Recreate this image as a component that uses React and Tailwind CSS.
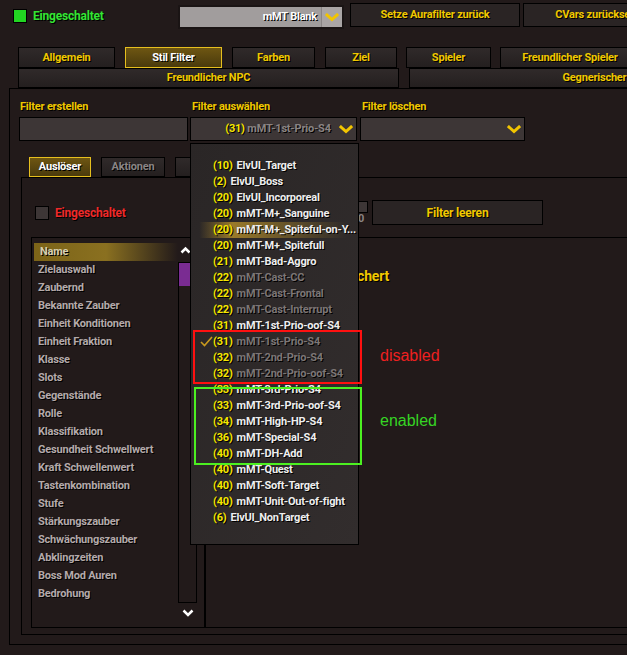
import React from "react";

const FONT = "font-[family-name:Roboto,'Liberation_Sans',sans-serif] font-bold tracking-[-0.2px] whitespace-nowrap";
const SH = "[text-shadow:1px_1px_0_#000]";

const FILTERS = [
  ["10", "ElvUI_Target", true],
  ["2", "ElvUI_Boss", true],
  ["20", "ElvUI_Incorporeal", true],
  ["20", "mMT-M+_Sanguine", true],
  ["20", "mMT-M+_Spiteful-on-Y...", true, "hover"],
  ["20", "mMT-M+_Spitefull", true],
  ["21", "mMT-Bad-Aggro", true],
  ["22", "mMT-Cast-CC", false],
  ["22", "mMT-Cast-Frontal", false],
  ["22", "mMT-Cast-Interrupt", false],
  ["31", "mMT-1st-Prio-oof-S4", true],
  ["31", "mMT-1st-Prio-S4", false, "checked"],
  ["32", "mMT-2nd-Prio-S4", false],
  ["32", "mMT-2nd-Prio-oof-S4", false],
  ["33", "mMT-3rd-Prio-S4", true],
  ["33", "mMT-3rd-Prio-oof-S4", true],
  ["34", "mMT-High-HP-S4", true],
  ["36", "mMT-Special-S4", true],
  ["40", "mMT-DH-Add", true],
  ["40", "mMT-Quest", true],
  ["40", "mMT-Soft-Target", true],
  ["40", "mMT-Unit-Out-of-fight", true],
  ["6", "ElvUI_NonTarget", true],
];

const TRIGGERS = [
  "Name",
  "Zielauswahl",
  "Zaubernd",
  "Bekannte Zauber",
  "Einheit Konditionen",
  "Einheit Fraktion",
  "Klasse",
  "Slots",
  "Gegenstände",
  "Rolle",
  "Klassifikation",
  "Gesundheit Schwellwert",
  "Kraft Schwellenwert",
  "Tastenkombination",
  "Stufe",
  "Stärkungszauber",
  "Schwächungszauber",
  "Abklingzeiten",
  "Boss Mod Auren",
  "Bedrohung",
];

function Chevron({ className = "" }) {
  return (
    <svg width="14" height="9" viewBox="0 0 14 9" className={className}>
      <path d="M2 2 L7 6.5 L12 2" fill="none" stroke="#f2c500" strokeWidth="3" strokeLinecap="square" />
    </svg>
  );
}

function Tab({ w, children, active, dim }) {
  return (
    <div
      className={`flex items-center justify-center h-full border ${w} ${SH} ${
        active
          ? "border-[#e6bf1e] bg-gradient-to-b from-[#6e5612] to-[#4a3a0c] text-white"
          : "border-black bg-gradient-to-b from-[#302a2a] to-[#241f1f] " + (dim ? "text-[#8a8585]" : "text-[#f0c800]")
      }`}
    >
      {children}
    </div>
  );
}

export default function App() {
  return (
    <div className={`relative w-[627px] h-[655px] overflow-hidden bg-[#221a1a] text-[11px] leading-[16px] ${FONT}`}>
      {/* top bar */}
      <div className="flex items-start h-[47px] pt-[3px]">
        <div className="shrink-0 flex items-center w-[178px] pl-[13px] pt-[5px]">
          <span className="w-[14px] h-[14px] bg-[#22d622] border border-black" />
          <span className={`ml-[6px] text-[12px] text-[#33e633] ${SH}`}>Eingeschaltet</span>
        </div>
        <div className="shrink-0 flex mt-[2px] w-[166px] h-[24px] border-2 border-[#1a1414] bg-[#a19d9d]">
          <div className={`flex-1 text-right pr-[4px] leading-[20px] text-white ${SH}`}>mMT Blank</div>
          <div className="w-[21px] flex items-center justify-center bg-[#aaa5a5] border-l border-[#8a8585]">
            <Chevron />
          </div>
        </div>
        <div className={`shrink-0 ml-[6px] w-[170px] h-[24px] flex items-center justify-center border border-black bg-[#2a2424] text-[#f0c800] ${SH}`}>
          Setze Aurafilter zurück
        </div>
        <div className={`shrink-0 ml-[3px] w-[160px] h-[24px] flex items-center justify-center border border-black bg-[#2a2424] text-[#f0c800] ${SH}`}>
          CVars zurücksetzen
        </div>
      </div>

      {/* tab rows */}
      <div className="flex h-[21px]">
        <div className="shrink-0 ml-[18px]"><Tab w="w-[97px]">Allgemein</Tab></div>
        <div className="shrink-0 ml-[10px]"><Tab w="w-[97px]" active>Stil Filter</Tab></div>
        <div className="shrink-0 ml-[10px]"><Tab w="w-[83px]">Farben</Tab></div>
        <div className="shrink-0 ml-[10px]"><Tab w="w-[72px]">Ziel</Tab></div>
        <div className="shrink-0 ml-[9px]"><Tab w="w-[85px]">Spieler</Tab></div>
        <div className="shrink-0 ml-[9px]"><Tab w="w-[140px]">Freundlicher Spieler</Tab></div>
      </div>
      <div className="flex h-[20px]">
        <div className="shrink-0 ml-[18px]"><Tab w="w-[381px]">Freundlicher NPC</Tab></div>
        <div className="shrink-0 ml-[10px]"><Tab w="w-[395px]">Gegnerischer NPC</Tab></div>
      </div>

      {/* outer panel */}
      <div className="ml-[9px] w-[700px] h-[557px] border border-black">
        <div className={`flex mt-[10px] text-[#f0c800] ${SH}`}>
          <div className="shrink-0 ml-[9px] w-[169px]">
            <div className="pl-[1px]">Filter erstellen</div>
            <div className="mt-[2px] h-[24px] border border-black bg-[#3d3636]" />
          </div>
          <div className="shrink-0 ml-[2px] w-[167px]">
            <div className="pl-[2px]">Filter auswählen</div>
            <div className="mt-[2px] h-[24px] border border-black bg-[#3d3636] flex items-center">
              <span className="flex-1 text-center pl-[26px]">
                <span className="text-[#f5e600]">(31) </span>
                <span className="text-[#8a8484]">mMT-1st-Prio-S4</span>
              </span>
              <Chevron className="mr-[3px]" />
            </div>
          </div>
          <div className="shrink-0 ml-[3px] w-[165px]">
            <div className="pl-[2px]">Filter löschen</div>
            <div className="mt-[2px] h-[24px] border border-black bg-[#3d3636] flex items-center justify-end">
              <Chevron className="mr-[3px]" />
            </div>
          </div>
        </div>

        {/* sub tabs */}
        <div className="flex mt-[16px] h-[20px]">
          <div className="shrink-0 ml-[19px]"><Tab w="w-[62px]" active>Auslöser</Tab></div>
          <div className="shrink-0 ml-[10px]"><Tab w="w-[64px]" dim>Aktionen</Tab></div>
          <div className="shrink-0 ml-[10px]"><Tab w="w-[64px]">Stil</Tab></div>
        </div>

        {/* tab panel */}
        <div className="ml-[11px] w-[700px] h-[458px] border border-black">
          <div className="flex items-start h-[59px]">
            <div className="shrink-0 flex items-center w-[336px] pl-[13px] pt-[27px]">
              <span className="w-[14px] h-[14px] bg-[#3d3636] border border-black" />
              <span className={`ml-[6px] text-[12px] text-[#ee2a2a] ${SH}`}>Eingeschaltet</span>
            </div>
            <div className="shrink-0 w-[14px] pt-[23px] text-[#8a8484]">
              <div className="w-[10px] h-[12px] bg-[#3d3636] border border-black" />
              <div className="text-[11px] leading-[12px]">0</div>
            </div>
            <div className={`shrink-0 mt-[22px] w-[171px] h-[25px] flex items-center justify-center border border-black bg-[#2a2424] text-[#f0c800] text-[12px] ${SH}`}>
              Filter leeren
            </div>
          </div>

          {/* inner box */}
          <div className="ml-[9px] flex h-[391px] border-t border-l border-b border-black">
            <div className="shrink-0 flex w-[174px] border-r-2 border-black">
              <div className="w-[146px] pt-[5px]">
                {TRIGGERS.map((t, i) => (
                  <div
                    key={t}
                    className={`h-[18px] pl-[6px] flex items-center ${SH} ${
                      i === 0
                        ? "ml-[2px] bg-gradient-to-r from-[#7c6418] via-[#8a7020] to-transparent text-[#d8d0b0]"
                        : "text-[#b4aaaa]"
                    }`}
                  >
                    {t}
                  </div>
                ))}
              </div>
              <div className="w-[19px] flex flex-col">
                <div className="h-[24px] flex items-center pl-[2px]">
                  <svg width="11" height="8" viewBox="0 0 11 8">
                    <path d="M1.5 6.5 L5.5 2.5 L9.5 6.5" fill="none" stroke="#fff" strokeWidth="2.5" />
                  </svg>
                </div>
                <div className="h-[341px] border border-black">
                  <div className="h-[23px] bg-[#7a2c92]" />
                </div>
                <div className="mt-[5px] h-[10px] flex items-center justify-center">
                  <svg width="12" height="8" viewBox="0 0 12 8">
                    <path d="M1.5 1.5 L6 6 L10.5 1.5" fill="none" stroke="#fff" strokeWidth="2.5" />
                  </svg>
                </div>
              </div>
            </div>
            <div className="flex-1">
              <div className={`mt-[28px] w-[183px] text-right text-[14px] leading-[20px] text-[#f0c800] ${SH}`}>
                Nicht gespeichert
              </div>
            </div>
          </div>
        </div>
      </div>

      {/* dropdown menu (overlay) */}
      <div className="absolute left-[190px] top-[143px] w-[169px] h-[402px] border border-black bg-gradient-to-br from-[#2a2626] to-[#322d2d] pt-[14px]">
        {FILTERS.map(([n, name, on, state], i) => (
          <div
            key={i}
            className={`relative h-[16px] flex items-center pl-[22px] ${SH} ${
              state === "hover" ? "bg-gradient-to-r from-transparent from-[5%] via-[#9a7a2a] via-[25%] to-transparent to-[93%]" : ""
            }`}
          >
            {state === "checked" && (
              <svg width="13" height="11" viewBox="0 0 13 11" className="absolute left-[9px] top-[2px]">
                <path d="M1 6 L4.5 9.5 L12 1" fill="none" stroke="#c99a1e" strokeWidth="1.6" />
              </svg>
            )}
            <span className="text-[#f5e600]">({n})</span>
            <span className={`ml-[4px] ${on ? "text-[#eeeeee]" : "text-[#7c7676]"}`}>{name}</span>
          </div>
        ))}
      </div>

      {/* annotations */}
      <div className="absolute left-[193px] top-[330px] w-[169px] h-[54px] border-2 border-[#ff1010]" />
      <div className="absolute left-[194px] top-[387px] w-[168px] h-[78px] border-2 border-[#4cf021]" />
      <div className="absolute left-[380px] top-[346px] font-[family-name:'Liberation_Sans',sans-serif] font-normal tracking-normal text-[16px] leading-[20px] text-[#ee2020]">
        disabled
      </div>
      <div className="absolute left-[380px] top-[411px] font-[family-name:'Liberation_Sans',sans-serif] font-normal tracking-normal text-[16px] leading-[20px] text-[#36d424]">
        enabled
      </div>
    </div>
  );
}
